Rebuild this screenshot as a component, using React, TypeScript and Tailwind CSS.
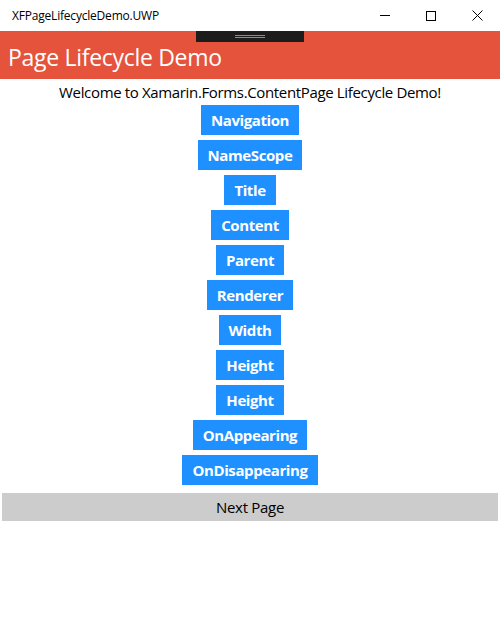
import React from "react";

const buttons = [
  "Navigation",
  "NameScope",
  "Title",
  "Content",
  "Parent",
  "Renderer",
  "Width",
  "Height",
  "Height",
  "OnAppearing",
  "OnDisappearing",
];

export default function App() {
  return (
    <div
      className="w-[500px] h-[620px] bg-white flex flex-col"
      style={{ fontFamily: '"Open Sans", "Noto Sans", sans-serif' }}
    >
      <div className="h-[31px] flex items-center justify-between shrink-0">
        <span className="pl-[12px] text-[12px] text-black tracking-[-0.2px]">
          XFPageLifecycleDemo.UWP
        </span>
        <div className="flex h-full items-center">
          <div className="w-[46px] h-full flex items-center justify-center">
            <div className="w-[10px] h-px bg-black" />
          </div>
          <div className="w-[46px] h-full flex items-center justify-center">
            <div className="w-[10px] h-[10px] border border-black" />
          </div>
          <div className="w-[46px] h-full flex items-center justify-center">
            <svg width="11" height="11" viewBox="0 0 11 11">
              <path d="M0.5 0.5 L10.5 10.5 M10.5 0.5 L0.5 10.5" stroke="black" strokeWidth="1" />
            </svg>
          </div>
        </div>
      </div>
      <div className="relative h-[48px] bg-[#e5533d] flex items-center shrink-0">
        <span className="pl-[8px] pt-[4px] text-[23px] text-white font-normal tracking-[-0.3px]">
          Page Lifecycle Demo
        </span>
        <div className="absolute left-[196px] top-0 w-[108px] h-[11px] bg-[#1c1c1c] flex flex-col items-center justify-center gap-[1px]">
          <div className="w-[30px] h-px bg-[#8a8a8a]" />
          <div className="w-[30px] h-px bg-[#8a8a8a]" />
        </div>
      </div>
      <div className="flex flex-col items-center pt-[1px]">
        <div className="h-[24px] flex items-center text-[15px] text-black tracking-[-0.35px]">
          Welcome to Xamarin.Forms.ContentPage Lifecycle Demo!
        </div>
        <div className="flex flex-col items-center gap-[5px] mt-[1px]">
          {buttons.map((b, i) => (
            <div
              key={i}
              className="h-[30px] px-[10px] bg-[#1e90ff] text-white font-bold text-[15px] flex items-center justify-center tracking-[-0.4px]"
            >
              {b}
            </div>
          ))}
        </div>
        <div className="mt-[8px] w-[496px] h-[28px] bg-[#cccccc] flex items-center justify-center text-[15px] text-black tracking-[-0.3px]">
          Next Page
        </div>
      </div>
    </div>
  );
}
